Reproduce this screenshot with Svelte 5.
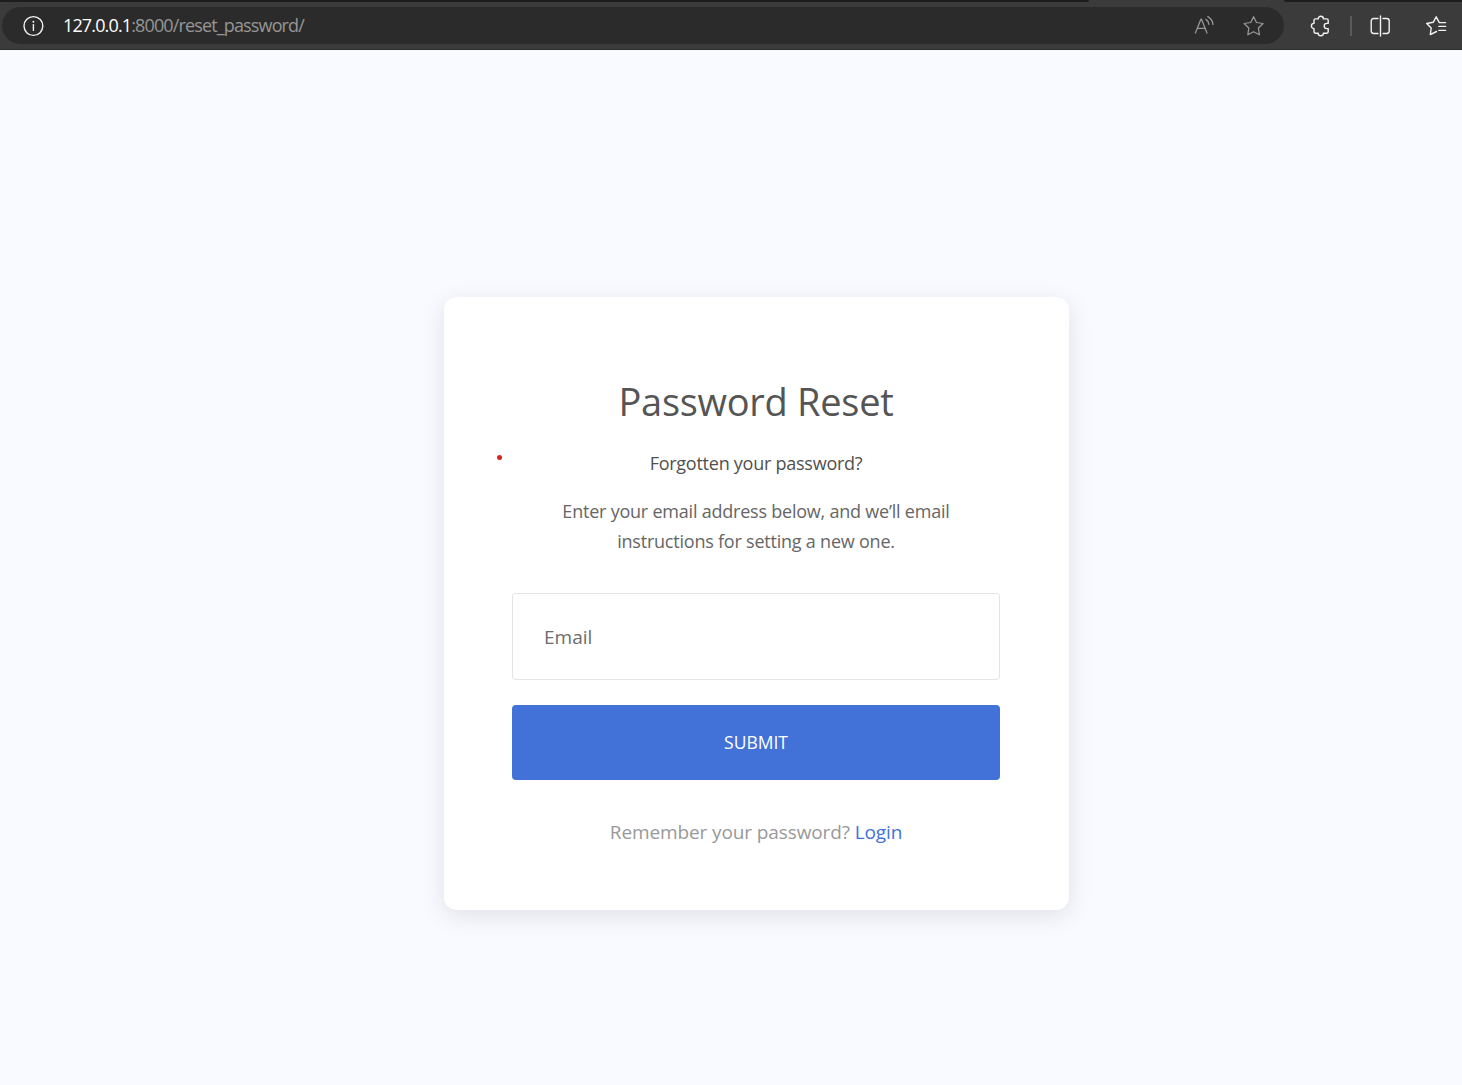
<script>
  let email = $state('');
</script>

<div class="page">
  <header class="toolbar">
    <div class="tabs"><span class="strip"></span><span class="active-tab"></span><span class="strip end"></span></div>
    <div class="controls">
      <div class="address">
        <svg class="info" width="22" height="22" viewBox="0 0 22 22">
          <circle cx="11.4" cy="11" r="9.4" />
          <path d="M11.4 9.6v5.8" />
          <circle class="dot" cx="11.4" cy="6.8" r="1" />
        </svg>
        <span class="url"><b>127.0.0.1</b><span class="rest">:8000/reset_password/</span></span>
        <svg class="read" width="22" height="22" viewBox="0 0 22 22">
          <path d="M2.4 18 8 4h.4L14 18M4.3 13.3h7.8M12.9 4.4q2.8 1.8 3 5M14.8 1.6q5 2.9 5.1 8" />
        </svg>
        <svg class="star" width="22" height="22" viewBox="0 0 22 22">
          <path d="M10.6 1.7 13.5 7.5 20.1 8.5 15.4 13 16.4 19.8 10.6 16.7 4.8 19.8 5.8 13 1.1 8.5 7.7 7.5Z" />
        </svg>
      </div>
      <svg class="puzzle" width="22" height="22" viewBox="0 0 22 22">
        <path d="M8.2 3.9a2.6 2.6 0 0 1 5.2 0h3.4a1.4 1.4 0 0 1 1.4 1.4v3.1h-1.4a2.6 2.6 0 0 0 0 5.2h1.4v3.2a1.4 1.4 0 0 1-1.4 1.4h-3.4a2.6 2.6 0 0 1-5.2 0H5.4A1.4 1.4 0 0 1 4 16.8v-3.2a2.6 2.6 0 0 1 0-5.2V5.3a1.4 1.4 0 0 1 1.4-1.4Z" />
      </svg>
      <span class="divider"></span>
      <svg class="split" width="22" height="22" viewBox="0 0 22 22">
        <path d="M9 3.5H4.6a2.4 2.4 0 0 0-2.4 2.4v10.2a2.4 2.4 0 0 0 2.4 2.4H9M11.5 1v20M14 3.5h3.8a2.4 2.4 0 0 1 2.4 2.4v10.2a2.4 2.4 0 0 1-2.4 2.4H14" />
      </svg>
      <svg class="favorites" width="22" height="22" viewBox="0 0 22 22">
        <path d="M20.6 7.6h-6.3L11.2 1.8 8.2 7.3 1.7 8.5 6.2 13 5.3 19.6 11.5 16.5M13.8 11.4h6.8M13.8 15.4h6.8" />
      </svg>
    </div>
  </header>

  <main>
    <form class="card" onsubmit={(e) => e.preventDefault()}>
      <h1>Password Reset</h1>
      <div class="question"><span class="required"></span><p>Forgotten your password?</p></div>
      <p class="help">Enter your email address below, and we’ll email<br />instructions for setting a new one.</p>
      <input type="email" placeholder="Email" aria-label="Email" bind:value={email} />
      <button type="submit">SUBMIT</button>
      <p class="login">Remember your password? <a href="#login">Login</a></p>
    </form>
  </main>
</div>

<style>
  :global(body) { background: #f8faff; }
  .page {
    height: 1085px;
    display: flex;
    flex-direction: column;
    overflow: hidden;
    background: #f8faff;
    font-family: "Open Sans", sans-serif;
  }
  .toolbar {
    height: 50px;
    box-sizing: border-box;
    background: #3b3b3b;
    border-bottom: 1px solid #2d2d2d;
    flex: none;
  }
  .tabs { display: flex; height: 2px; }
  .strip { width: 1089px; background: #1d1d1d; border-radius: 0 0 4px 0; }
  .active-tab { width: 195px; }
  .strip.end { flex: 1; border-radius: 0 0 0 4px; }
  .controls { display: flex; align-items: center; padding: 5px 15px 0 2px; height: 37px; }
  .address {
    display: flex;
    align-items: center;
    box-sizing: border-box;
    width: 1282px;
    height: 37px;
    padding: 0 19px 0 20px;
    border-radius: 19px;
    background: #2b2b2b;
  }
  svg { display: block; flex: none; fill: none; stroke: #f2f2f2; stroke-width: 1.4; stroke-linejoin: round; stroke-linecap: round; }
  .dot { fill: #f2f2f2; stroke: none; }
  .url { margin-left: 19px; flex: 1; font: 18px/24px "Open Sans", sans-serif; letter-spacing: -0.86px; color: #969696; padding-bottom: 2px; }
  .url b { font-weight: 400; color: #fff; }
  .read, .star { stroke: #999; stroke-width: 1.25; }
  .star { margin-left: 28px; }
  .puzzle { margin-left: 26px; }
  .divider { width: 2px; height: 20px; margin-left: 18px; background: #5b5b5b; }
  .split { margin-left: 17px; }
  .favorites { margin-left: 34px; }
  main { flex: 1; padding: 247px 0 0 444px; }
  .card {
    width: 625px;
    height: 613px;
    box-sizing: border-box;
    padding: 74px 69px 0 68px;
    border-radius: 13px;
    background: #fff;
    box-shadow: 0 6px 25px rgba(0, 0, 0, 0.1);
    text-align: center;
  }
  h1, p { margin: 0; }
  h1 { font-size: 38px; line-height: 60px; font-weight: 400; letter-spacing: -0.28px; color: #555; }
  .question { display: flex; align-items: flex-start; margin: 17px 0 0 -15px; }
  .required { width: 5px; height: 5px; margin-top: 7px; border-radius: 50%; background: #dc2020; }
  .question p { flex: 1; padding-left: 10px; font-size: 18px; line-height: 30px; letter-spacing: -0.25px; color: #505050; }
  .help { margin-top: 18px; font-size: 18px; line-height: 30px; letter-spacing: -0.22px; color: #666; }
  input {
    display: block;
    width: 488px;
    height: 87px;
    box-sizing: border-box;
    margin: 37px 0 0;
    padding: 0 32px 0 31px;
    border: 1px solid #e4e4e4;
    border-radius: 3px;
    background: #fff;
    font: 19px "Open Sans", sans-serif;
    color: #666;
    outline: none;
  }
  input::placeholder { color: #6c6c6c; opacity: 1; }
  button {
    display: block;
    width: 488px;
    height: 75px;
    margin: 25px 0 0;
    padding: 0 0 2px;
    border: 0;
    border-radius: 4px;
    background: #4272d7;
    font: 17.5px "Open Sans", sans-serif;
    color: #fff;
  }
  .login { margin-top: 37px; font-size: 19px; line-height: 30px; letter-spacing: -0.11px; color: #999; }
  a { color: #4272d7; text-decoration: none; }
</style>
